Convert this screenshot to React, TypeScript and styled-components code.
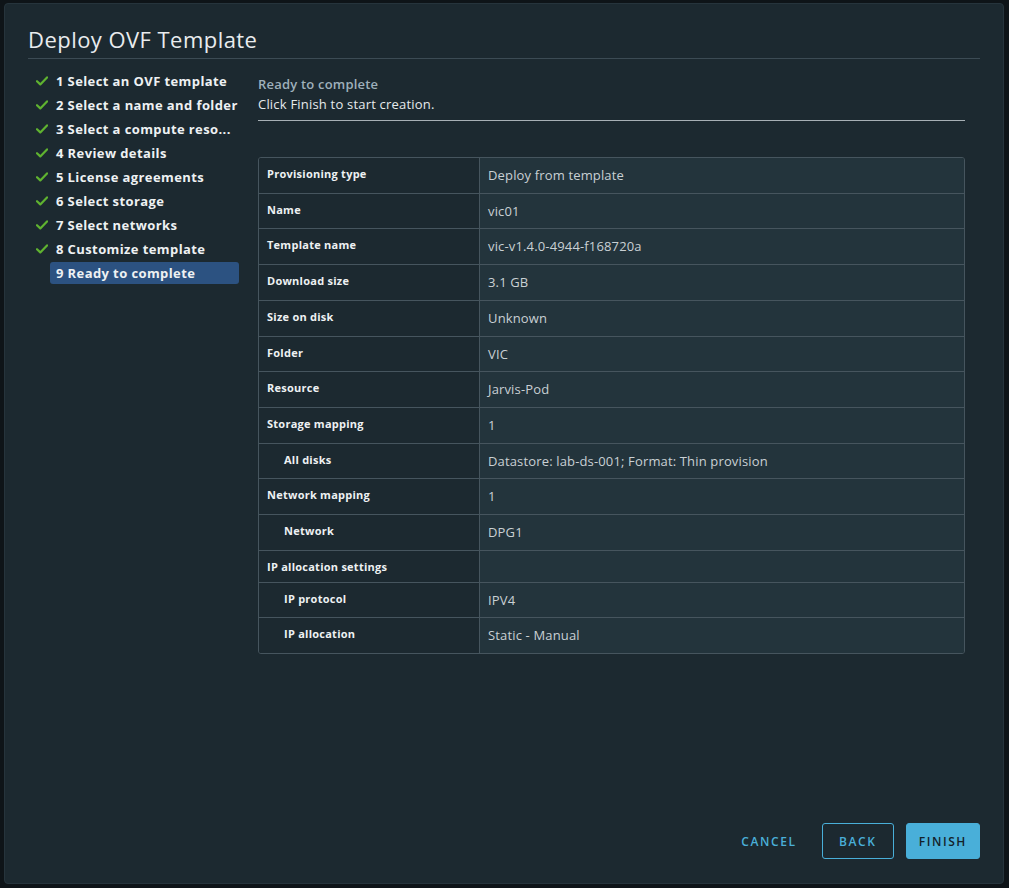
import React from "react";
import styled, { createGlobalStyle } from "styled-components";

const Global = createGlobalStyle`
  html, body {
    margin: 0;
    padding: 0;
    background: #0e1418;
    font-family: "Open Sans", "Liberation Sans", sans-serif;
  }
  * { box-sizing: border-box; }
`;

const Page = styled.div`
  width: 1009px;
  height: 888px;
  padding: 3px 5px 4px 4px;
  background: #0e1418;
`;

const Modal = styled.div`
  width: 1000px;
  height: 881px;
  background: #1c2930;
  border: 1px solid #26343c;
  border-radius: 4px;
  display: flex;
  flex-direction: column;
  padding: 0 23px 24px 23px;
`;

const Header = styled.div`
  padding-top: 21px;
  padding-bottom: 5px;
  border-bottom: 1px solid #3c4b54;
`;

const Title = styled.h1`
  margin: 0;
  font-size: 22px;
  line-height: 28px;
  font-weight: 400;
  color: #e9ecee;
  letter-spacing: 0.45px;
`;

const Body = styled.div`
  flex: 1;
  display: flex;
  gap: 19px;
  padding-top: 11px;
  min-height: 0;
`;

const Steps = styled.ol`
  list-style: none;
  margin: 0;
  padding: 0;
  width: 211px;
  flex: none;
  display: flex;
  flex-direction: column;
  gap: 2px;
`;

const Step = styled.li`
  display: flex;
  align-items: center;
  height: 22px;
`;

const CheckSlot = styled.span`
  width: 22px;
  flex: none;
  display: flex;
  align-items: center;
  padding-left: 8px;
`;

const StepLabel = styled.span<{ $active?: boolean }>`
  flex: 1;
  min-width: 0;
  height: 22px;
  line-height: 22px;
  padding: 0 0 0 6px;
  border-radius: 3px;
  background: ${(p) => (p.$active ? "#2c5281" : "transparent")};
  color: #eef1f3;
  font-size: 13px;
  font-weight: 700;
  white-space: nowrap;
  letter-spacing: 0.4px;
`;

const Content = styled.div`
  width: 707px;
  flex: none;
  padding-top: 4px;
`;

const Intro = styled.div`
  border-bottom: 1px solid #a7b0b5;
  padding-bottom: 5px;
`;

const IntroTitle = styled.div`
  font-size: 13px;
  line-height: 20px;
  font-weight: 600;
  color: #9fb0bb;
  letter-spacing: 0.2px;
`;

const IntroText = styled.div`
  font-size: 13px;
  line-height: 21px;
  color: #e6eaec;
  letter-spacing: 0.2px;
`;

const Table = styled.table`
  margin-top: 36px;
  width: 707px;
  border-collapse: separate;
  border-spacing: 0;
  border: 1px solid #46555e;
  border-radius: 3px;
  overflow: hidden;
  table-layout: fixed;
`;

const Row = styled.tr<{ $last?: boolean }>`
  & > td {
    border-bottom: ${(p) => (p.$last ? "none" : "1px solid #46555e")};
  }
`;

const LabelCell = styled.td<{ $indent?: boolean }>`
  width: 221px;
  vertical-align: top;
  padding: 8px 9px 8px ${(p) => (p.$indent ? "25px" : "8px")};
  background: #1c2930;
  border-right: 1px solid #46555e;
  font-size: 11px;
  line-height: 15px;
  font-weight: 700;
  color: #eef1f3;
  white-space: nowrap;
  letter-spacing: 0.25px;
`;

const ValueCell = styled.td`
  vertical-align: top;
  padding: 8px 8px;
  background: #23343c;
  font-size: 13px;
  line-height: 18.7px;
  color: #c9d0d4;
  white-space: nowrap;
  letter-spacing: 0.15px;
`;

const Footer = styled.div`
  display: flex;
  justify-content: flex-end;
  align-items: center;
  gap: 12px;
`;

const Button = styled.button<{ $variant: "flat" | "outline" | "solid" }>`
  height: 36px;
  min-width: 72px;
  padding: 0 12px;
  border-radius: 3px;
  font-family: "Open Sans", "Liberation Sans", sans-serif;
  font-size: 12px;
  font-weight: 600;
  letter-spacing: 1.6px;
  text-transform: uppercase;
  cursor: pointer;
  border: 1px solid
    ${(p) => (p.$variant === "flat" ? "transparent" : "#49afd9")};
  background: ${(p) => (p.$variant === "solid" ? "#49afd9" : "transparent")};
  color: ${(p) => (p.$variant === "solid" ? "#14222a" : "#4aafd8")};
`;

const Check = () => (
  <svg width="12" height="10" viewBox="0 0 12 10">
    <path
      d="M1 5.2 L4.3 8.4 L11 1.4"
      fill="none"
      stroke="#5fb330"
      strokeWidth="2.2"
      strokeLinecap="round"
      strokeLinejoin="round"
    />
  </svg>
);

const steps = [
  "1 Select an OVF template",
  "2 Select a name and folder",
  "3 Select a compute reso...",
  "4 Review details",
  "5 License agreements",
  "6 Select storage",
  "7 Select networks",
  "8 Customize template",
  "9 Ready to complete",
];

const rows: { label: string; value: string; indent?: boolean }[] = [
  { label: "Provisioning type", value: "Deploy from template" },
  { label: "Name", value: "vic01" },
  { label: "Template name", value: "vic-v1.4.0-4944-f168720a" },
  { label: "Download size", value: "3.1 GB" },
  { label: "Size on disk", value: "Unknown" },
  { label: "Folder", value: "VIC" },
  { label: "Resource", value: "Jarvis-Pod" },
  { label: "Storage mapping", value: "1" },
  { label: "All disks", value: "Datastore: lab-ds-001; Format: Thin provision", indent: true },
  { label: "Network mapping", value: "1" },
  { label: "Network", value: "DPG1", indent: true },
  { label: "IP allocation settings", value: "" },
  { label: "IP protocol", value: "IPV4", indent: true },
  { label: "IP allocation", value: "Static - Manual", indent: true },
];

export default function App() {
  return (
    <>
      <Global />
      <Page>
        <Modal>
          <Header>
            <Title>Deploy OVF Template</Title>
          </Header>
          <Body>
            <Steps>
              {steps.map((s, i) => (
                <Step key={s}>
                  <CheckSlot>{i < steps.length - 1 ? <Check /> : null}</CheckSlot>
                  <StepLabel $active={i === steps.length - 1}>{s}</StepLabel>
                </Step>
              ))}
            </Steps>
            <Content>
              <Intro>
                <IntroTitle>Ready to complete</IntroTitle>
                <IntroText>Click Finish to start creation.</IntroText>
              </Intro>
              <Table>
                <tbody>
                  {rows.map((r, i) => (
                    <Row key={r.label} $last={i === rows.length - 1}>
                      <LabelCell $indent={r.indent}>{r.label}</LabelCell>
                      <ValueCell>{r.value}</ValueCell>
                    </Row>
                  ))}
                </tbody>
              </Table>
            </Content>
          </Body>
          <Footer>
            <Button $variant="flat">Cancel</Button>
            <Button $variant="outline">Back</Button>
            <Button $variant="solid">Finish</Button>
          </Footer>
        </Modal>
      </Page>
    </>
  );
}
